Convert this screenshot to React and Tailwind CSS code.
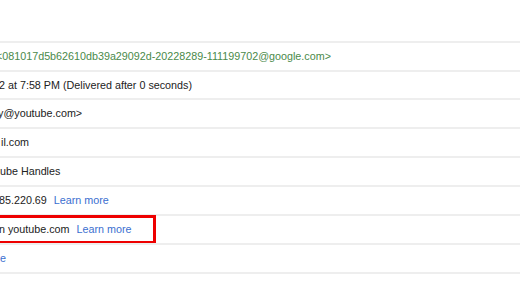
import React from "react";

const rows = [
  { h: "h-[29px]", text: "<081017d5b62610db39a29092d-20228289-111199702@google.com>", shift: "-ml-[4px]", green: true },
  { h: "h-[28px]", text: "2 at 7:58 PM (Delivered after 0 seconds)", shift: "-ml-[1px]" },
  { h: "h-[29px]", text: "y@youtube.com>", shift: "-ml-[2px]" },
  { h: "h-[29px]", text: "il.com", shift: "ml-[1px]" },
  { h: "h-[29px]", text: "ube Handles", shift: "ml-0" },
  { h: "h-[29px]", text: "85.220.69", shift: "-ml-[1px]", link: "Learn more" },
  { h: "h-[29px]", text: "n youtube.com", shift: "-ml-[1px]", link: "Learn more", boxed: true },
  { h: "h-[29px]", text: "", shift: "ml-0", link: "e", linkOnly: true },
];

const Row = ({ row }) => (
  <div className={`relative flex items-center ${row.h} border-t-2 border-[#eeeeee]`}>
    <div className={`flex items-center whitespace-nowrap ${row.shift}`}>
      {row.text && (
        <span className={row.green ? "text-[#4a8a4a]" : "text-[#222222]"}>{row.text}</span>
      )}
      {row.link && (
        <span className={`text-[#3b6fd0] ${row.linkOnly ? "ml-0" : "ml-[7px]"}`}>{row.link}</span>
      )}
    </div>
    {row.boxed && (
      <div className="absolute -left-[10px] top-[-1px] w-[166px] h-[29px] border-[3px] border-[#ee0000]" />
    )}
  </div>
);

function App() {
  return (
    <div
      className="w-[520px] h-[292px] overflow-hidden bg-white text-[10.75px]"
      style={{ fontFamily: "'Liberation Sans', Arial, sans-serif" }}
    >
      <div className="h-[41px]" />
      {rows.map((row, index) => (
        <Row key={index} row={row} />
      ))}
      <div className="border-t-2 border-[#eeeeee]" />
    </div>
  );
}

export default App;
